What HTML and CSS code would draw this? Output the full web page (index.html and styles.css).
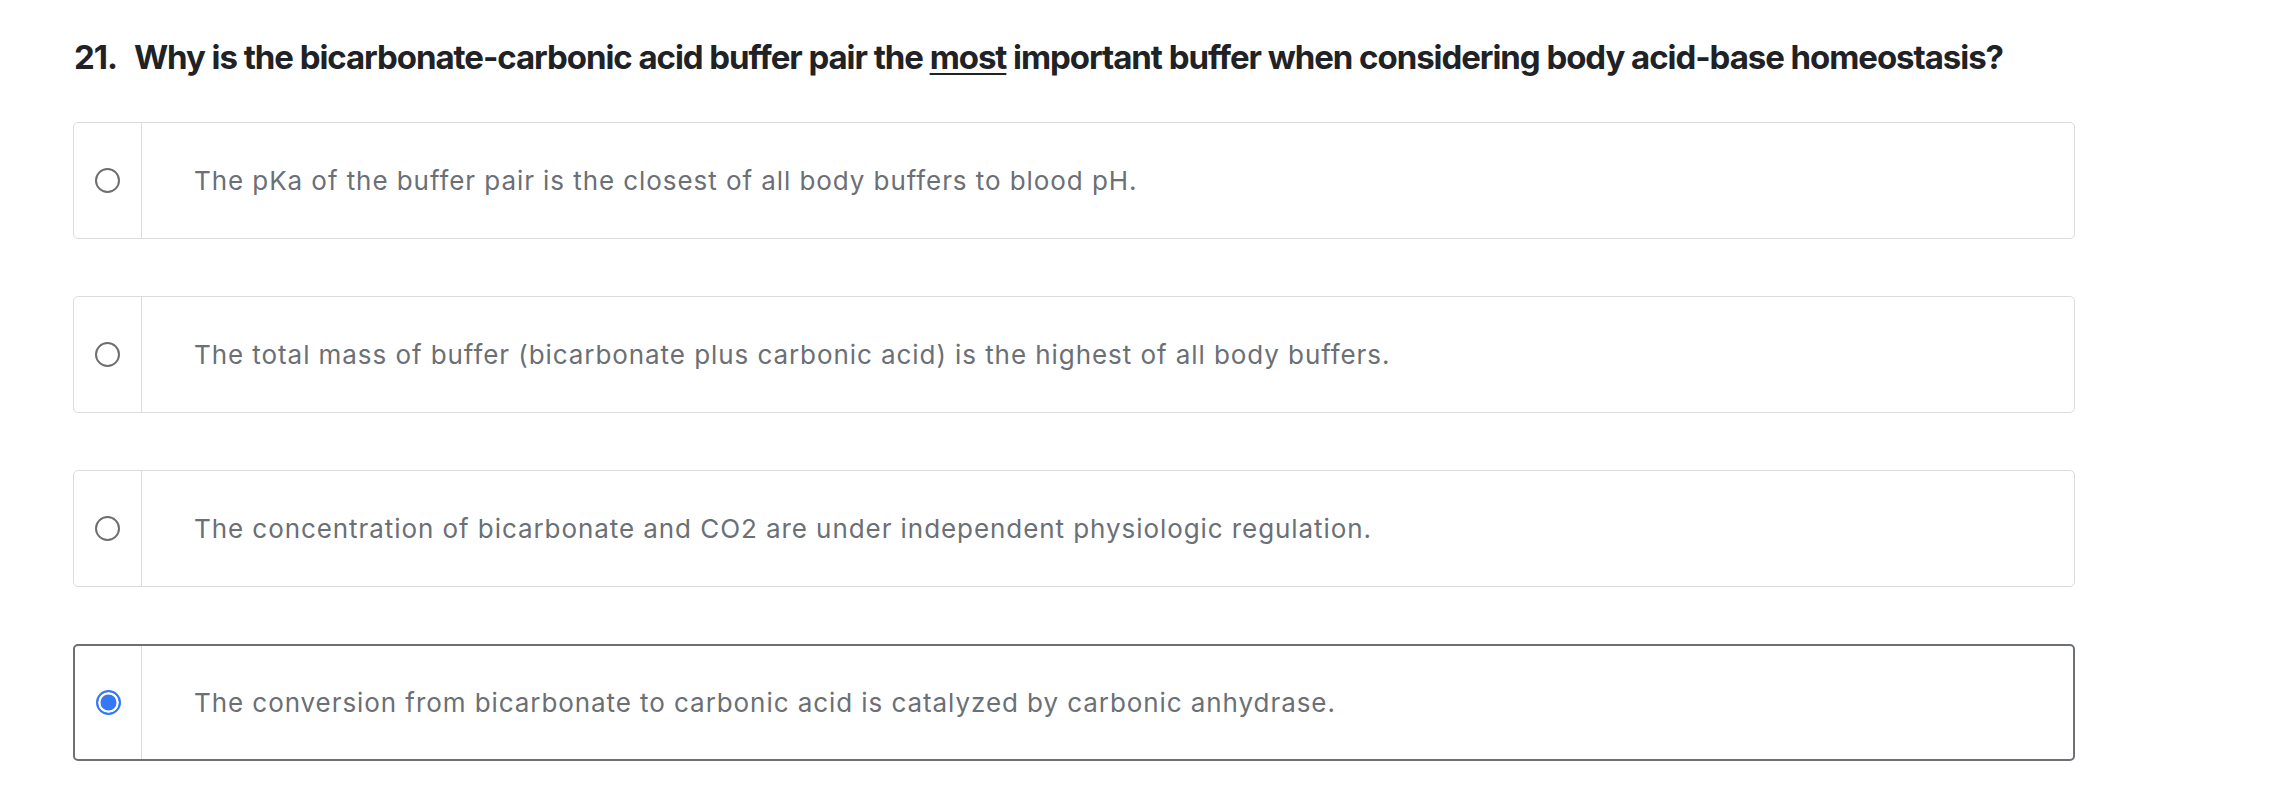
FILE: index.html
```html
<!DOCTYPE html>
<html lang="en">
<head>
<meta charset="utf-8">
<title>Question 21</title>
<link rel="stylesheet" href="styles.css">
</head>
<body>
<main class="question">
  <h2 class="question-title"><span class="q-num">21.</span><span class="q-text">Why is the bicarbonate-carbonic acid buffer pair the <u>most</u> important buffer when considering body acid-base homeostasis?</span></h2>
  <ul class="options">
    <li class="option">
      <div class="opt-radio"><span class="radio"></span></div>
      <div class="opt-text">The pKa of the buffer pair is the closest of all body buffers to blood pH.</div>
    </li>
    <li class="option">
      <div class="opt-radio"><span class="radio"></span></div>
      <div class="opt-text">The total mass of buffer (bicarbonate plus carbonic acid) is the highest of all body buffers.</div>
    </li>
    <li class="option">
      <div class="opt-radio"><span class="radio"></span></div>
      <div class="opt-text">The concentration of bicarbonate and CO2 are under independent physiologic regulation.</div>
    </li>
    <li class="option selected">
      <div class="opt-radio"><span class="radio checked"></span></div>
      <div class="opt-text">The conversion from bicarbonate to carbonic acid is catalyzed by carbonic anhydrase.</div>
    </li>
  </ul>
</main>
</body>
</html>
```

FILE: styles.css
```css
* { box-sizing: border-box; }
html, body { margin: 0; padding: 0; background: #ffffff; }
body { font-family: Inter, "Noto Sans", "Liberation Sans", sans-serif; }

.question {
  padding: 37px 0 0 73px;
  width: 2075px;
}

.question-title {
  margin: 0 0 45px 1px;
  font-size: 33px;
  line-height: 40px;
  font-weight: 700;
  color: #212226;
  letter-spacing: -1.05px;
  display: flex;
  white-space: nowrap;
}
.q-num { margin-right: 17px; }
.q-text u { text-decoration-thickness: 2px; text-underline-offset: 4px; }

.options {
  list-style: none;
  margin: 0;
  padding: 0;
  display: flex;
  flex-direction: column;
  gap: 57px;
}

.option {
  display: flex;
  height: 117px;
  border: 1.5px solid #dcdcdc;
  border-radius: 5px;
}
.option.selected { border: 2px solid #6d7075; }

.opt-radio {
  width: 68px;
  flex: none;
  display: flex;
  align-items: center;
  justify-content: center;
  border-right: 1.5px solid #dcdcdc;
}
.option.selected .opt-radio { width: 67px; }

.radio {
  width: 25px;
  height: 25px;
  border-radius: 50%;
  border: 2px solid #6e6e6e;
  background: #fff;
  display: block;
}
.radio.checked {
  border: 2.5px solid #3478f6;
  background: #3478f6;
  box-shadow: inset 0 0 0 2.5px #fff;
}

.opt-text {
  flex: 1;
  display: flex;
  align-items: center;
  padding-left: 52px;
  font-size: 26px;
  letter-spacing: 0.93px;
  color: #6b6f76;
}
```
